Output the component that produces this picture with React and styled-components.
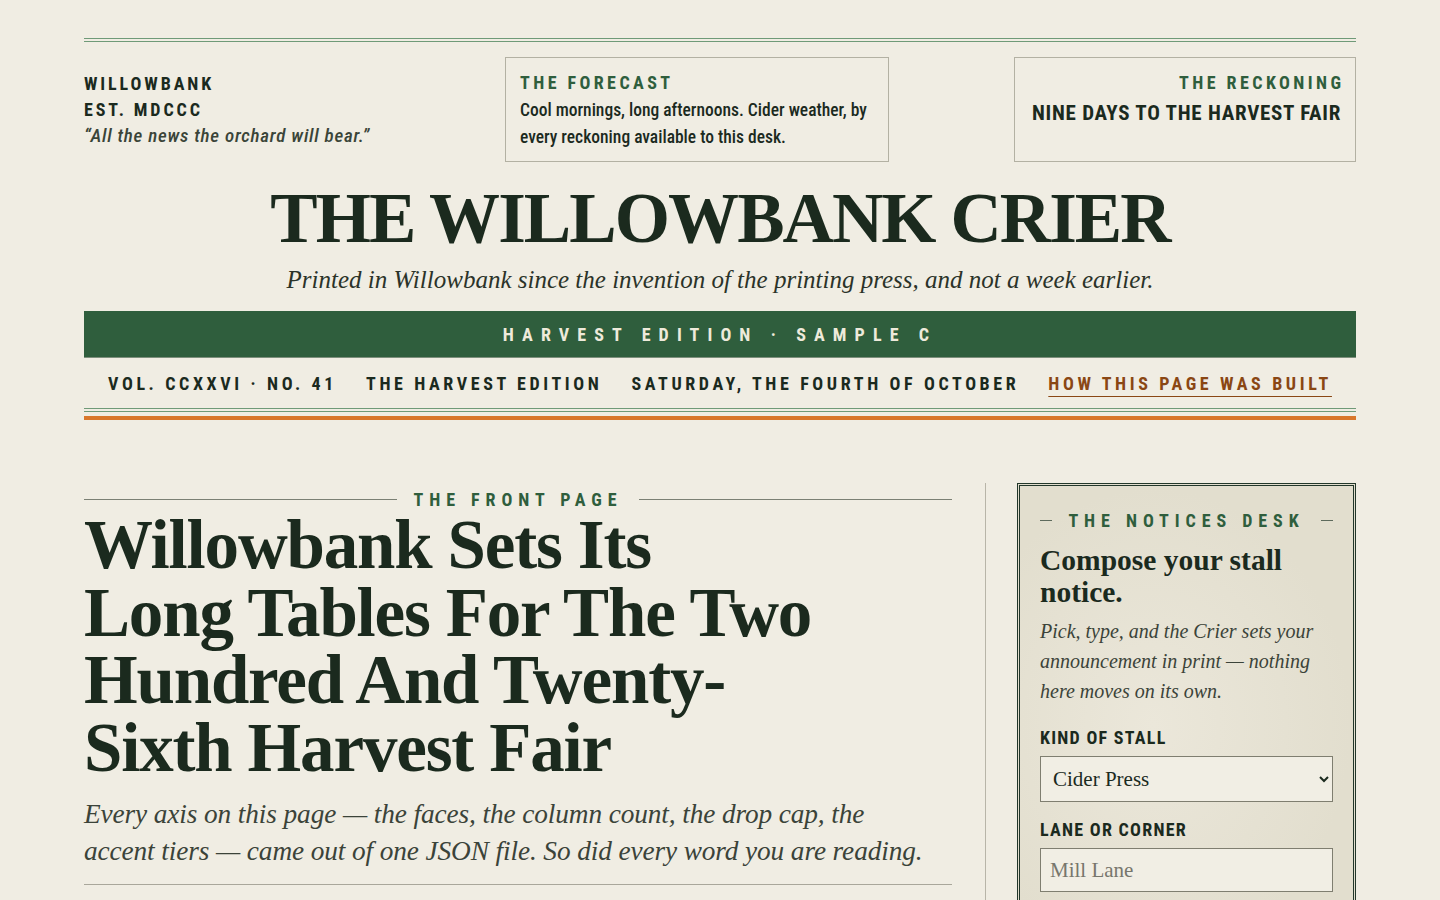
import React from 'react';
import styled, { createGlobalStyle } from 'styled-components';

const ink = '#1b2a1e';
const green = '#2f5e3d';
const rust = '#8a4714';
const cond = `Roboto, "Liberation Sans", sans-serif`;
const serif = `"Liberation Serif", "DejaVu Serif", serif`;

const Global = createGlobalStyle`
  html, body { margin:0; padding:0; background:#f0ede3; color:${ink}; }
  body { font-family:${serif}; }
  * { box-sizing:border-box; }
`;

const Page = styled.div`
  padding:38px 84px 0;
  min-height:900px;
  overflow:hidden;
`;

const DoubleRule = styled.div`
  height:4px;
  border-top:1px solid #6f9a78;
  border-bottom:1px solid #6f9a78;
`;

const TopRow = styled.div`
  display:flex;
  justify-content:space-between;
  align-items:center;
  margin-top:15px;
`;

const Motto = styled.div`
  width:296px;
  font-family:${cond};
  font-stretch:75%;
`;

const MottoLine = styled.div`
  font-size:18px;
  font-weight:700;
  letter-spacing:0.16em;
  line-height:26px;
`;

const MottoQuote = styled.div`
  font-size:19px;
  font-style:italic;
  font-weight:500;
  color:#3a4438;
  line-height:26px;
  letter-spacing:0.04em;
`;

const Ear = styled.div`
  width:${p => p.$w}px;
  height:105px;
  border:1px solid #b3b1a3;
  padding:13px 14px 0;
  text-align:${p => p.$align || 'left'};
  font-family:${cond};
  font-stretch:75%;
`;

const EarKicker = styled.div`
  color:${green};
  font-size:18px;
  font-weight:700;
  letter-spacing:0.19em;
  line-height:24px;
  margin-right:${p => (p.$right ? '-0.19em' : 0)};
`;

const EarBody = styled.div`
  font-size:17.5px;
  font-weight:500;
  line-height:27px;
  color:${ink};
  margin-top:2px;
`;

const EarBig = styled.div`
  font-size:21px;
  font-weight:700;
  letter-spacing:0.035em;
  line-height:30px;
  margin-top:3px;
  white-space:nowrap;
`;

const Title = styled.h1`
  margin:12px 0 0;
  text-align:center;
  font-family:${serif};
  font-weight:700;
  font-size:71px;
  line-height:88px;
  letter-spacing:-0.027em;
  color:${ink};
`;

const Tagline = styled.div`
  text-align:center;
  font-style:italic;
  font-size:25px;
  color:#2b3329;
  margin-top:4px;
`;

const EditionBar = styled.div`
  margin-top:17px;
  height:47px;
  background:${green};
  color:#eeeadb;
  display:flex;
  align-items:center;
  justify-content:center;
  font-family:${cond};
  font-stretch:75%;
  font-weight:700;
  font-size:18px;
  letter-spacing:0.45em;
  border-bottom:1px solid #7d8f7c;
`;

const NavRow = styled.nav`
  display:flex;
  justify-content:center;
  gap:29px;
  align-items:center;
  height:50px;
  font-family:${cond};
  font-stretch:75%;
  font-weight:700;
  font-size:18px;
  letter-spacing:0.2em;
  white-space:nowrap;
`;

const NavItem = styled.span`
  color:${p => (p.$link ? rust : ink)};
  text-decoration:${p => (p.$link ? 'underline' : 'none')};
  text-underline-offset:6px;
  text-decoration-thickness:1px;
`;

const Orange = styled.div`
  height:4px;
  background:#d9772b;
  margin-top:4px;
`;

const Main = styled.div`
  display:grid;
  grid-template-columns:868px 1fr 339px;
  margin-top:63px;
`;

const Divider = styled.div`
  width:1px;
  background:#b8b5a8;
  justify-self:center;
  margin-left:2px;
`;

const Kicker = styled.div`
  display:flex;
  align-items:center;
  gap:16px;
  margin-top:6px;
  font-family:${cond};
  font-stretch:75%;
  font-weight:700;
  color:${green};
  font-size:18px;
  letter-spacing:0.33em;
  &::before, &::after {
    content:'';
    flex:1;
    height:1px;
    background:#7b8074;
  }
`;

const Headline = styled.h2`
  margin:2px 0 0;
  font-family:${serif};
  font-weight:700;
  font-size:69px;
  line-height:67.5px;
  letter-spacing:-0.017em;
  color:${ink};
`;

const Deck = styled.p`
  margin:14px 0 0;
  font-style:italic;
  font-size:27.3px;
  line-height:37px;
  color:#3b4339;
  padding-bottom:14px;
  border-bottom:1px solid #a9a79b;
  white-space:nowrap;
  letter-spacing:-0.004em;
`;

const Desk = styled.aside`
  border:3px double #22372a;
  background:radial-gradient(ellipse at 40% 55%, #ebe7da 0%, #e2dece 70%);
  padding:24px 20px 30px;
  height:440px;
`;

const DeskKicker = styled.div`
  display:flex;
  align-items:center;
  justify-content:center;
  gap:16px;
  font-family:${cond};
  font-stretch:75%;
  font-weight:700;
  color:${green};
  font-size:18px;
  letter-spacing:0.33em;
  white-space:nowrap;
  &::before, &::after {
    content:'';
    width:12px;
    height:1px;
    background:#5d6a5c;
  }
`;

const DeskTitle = styled.h3`
  margin:13px 0 0;
  font-size:29.5px;
  line-height:32px;
  font-weight:700;
  color:${ink};
`;

const DeskLede = styled.p`
  margin:8px 0 0;
  font-style:italic;
  font-size:20px;
  line-height:30px;
  color:#3b4339;
`;

const Label = styled.label`
  display:block;
  margin-top:${p => p.$mt || 17}px;
  font-family:${cond};
  font-stretch:75%;
  font-weight:700;
  font-size:18px;
  letter-spacing:0.07em;
  color:${ink};
`;

const Select = styled.select`
  display:block;
  width:100%;
  height:46px;
  margin-top:8px;
  padding:0 8px;
  background:#f1eee4;
  border:1px solid #7f7e70;
  border-radius:0;
  font-family:${serif};
  font-size:21px;
  color:${ink};
`;

const Input = styled.input`
  display:block;
  width:100%;
  height:44px;
  margin-top:8px;
  padding:0 9px;
  background:#f1eee4;
  border:1px solid #7f7e70;
  font-family:${serif};
  font-size:21px;
  color:${ink};
  &::placeholder { color:#77766c; }
`;

export default function App() {
  return (
    <Page>
      <Global />
      <DoubleRule />
      <TopRow>
        <Motto>
          <MottoLine>WILLOWBANK</MottoLine>
          <MottoLine>EST. MDCCC</MottoLine>
          <MottoQuote>“All the news the orchard will bear.”</MottoQuote>
        </Motto>
        <Ear $w={384}>
          <EarKicker>THE FORECAST</EarKicker>
          <EarBody>Cool mornings, long afternoons. Cider weather, by every reckoning available to this desk.</EarBody>
        </Ear>
        <Ear $w={342} $align="right">
          <EarKicker $right>THE RECKONING</EarKicker>
          <EarBig>NINE DAYS TO THE HARVEST FAIR</EarBig>
        </Ear>
      </TopRow>
      <Title>THE WILLOWBANK CRIER</Title>
      <Tagline>Printed in Willowbank since the invention of the printing press, and not a week earlier.</Tagline>
      <EditionBar>HARVEST EDITION · SAMPLE C</EditionBar>
      <NavRow>
        <NavItem>VOL. CCXXVI · NO. 41</NavItem>
        <NavItem>THE HARVEST EDITION</NavItem>
        <NavItem>SATURDAY, THE FOURTH OF OCTOBER</NavItem>
        <NavItem $link>HOW THIS PAGE WAS BUILT</NavItem>
      </NavRow>
      <DoubleRule />
      <Orange />
      <Main>
        <section>
          <Kicker>THE FRONT PAGE</Kicker>
          <Headline>Willowbank Sets Its<br />Long Tables For The Two<br />Hundred And Twenty-<br />Sixth Harvest Fair</Headline>
          <Deck>Every axis on this page — the faces, the column count, the drop cap, the<br />accent tiers — came out of one JSON file. So did every word you are reading.</Deck>
        </section>
        <Divider />
        <Desk>
          <DeskKicker>THE NOTICES DESK</DeskKicker>
          <DeskTitle>Compose your stall notice.</DeskTitle>
          <DeskLede>Pick, type, and the Crier sets your announcement in print — nothing here moves on its own.</DeskLede>
          <Label $mt={21}>KIND OF STALL</Label>
          <Select defaultValue="Cider Press">
            <option>Cider Press</option>
            <option>Apple Cart</option>
            <option>Bake Table</option>
          </Select>
          <Label>LANE OR CORNER</Label>
          <Input placeholder="Mill Lane" />
        </Desk>
      </Main>
    </Page>
  );
}
